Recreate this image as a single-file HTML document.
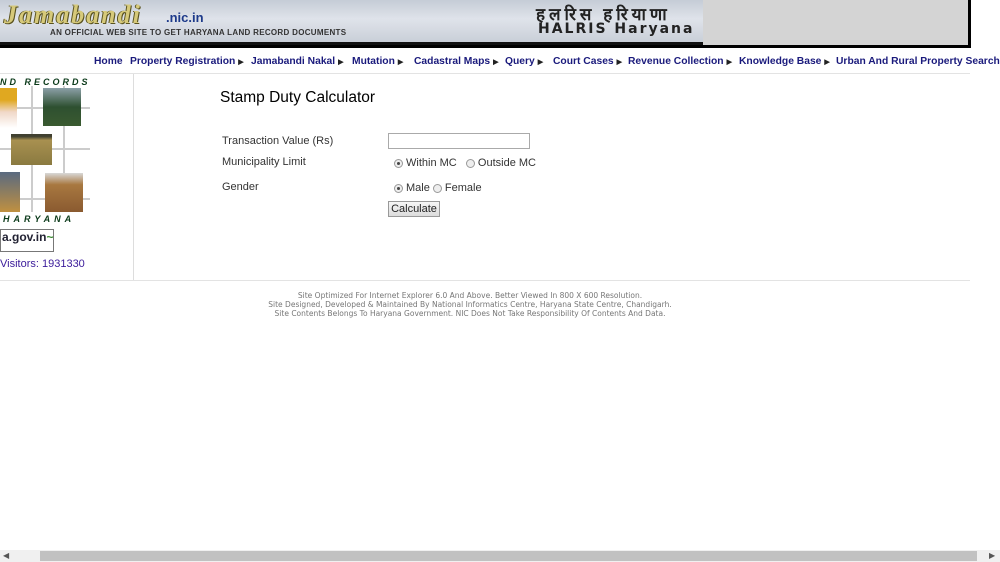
<!DOCTYPE html>
<html><head><meta charset="utf-8"><style>
*{margin:0;padding:0;box-sizing:border-box}
body{width:1000px;height:562px;overflow:hidden;background:#fff;font-family:"Liberation Sans",Arial,sans-serif;position:relative}
.hdr{position:absolute;left:0;top:0;width:971px;height:48px;background:#d4d4d4;border-right:3px solid #000;border-bottom:3px solid #000}
.ban{position:absolute;left:0;top:0;width:703px;height:45px;background:linear-gradient(180deg,#c5ccd6 0%,#dfe3ea 45%,#c9cfd8 100%);overflow:hidden;border-bottom:3px solid #111}
.logo{position:absolute;left:4px;top:0px;font:italic bold 26px "Liberation Serif",serif;color:#d6c97a;text-shadow:1px 1px 0 #5a5320,-1px 0 0 #5a5320;letter-spacing:2px}
.nic{position:absolute;left:166px;top:10px;font:bold 13px "Liberation Sans",sans-serif;color:#1d3a8a}
.tag{position:absolute;left:50px;top:28px;font:bold 8px "Liberation Sans",sans-serif;color:#333;letter-spacing:.3px}
.hin{position:absolute;left:536px;top:0px;font:bold 17px "Noto Sans CJK SC",sans-serif;color:#222;letter-spacing:4px}
.hal{position:absolute;left:538px;top:21px;font:bold 14px "DejaVu Sans",sans-serif;color:#222;letter-spacing:2px}
.nav span{position:absolute;top:56px;font:bold 10.3px "Liberation Sans",sans-serif;color:#1a1a7c;white-space:nowrap}
.nav b{font-size:7px;color:#222;margin-left:3px}
.line{position:absolute;left:0;width:970px;height:1px;background:#e3e3e3}
.vl{position:absolute;left:133px;top:74px;width:1px;height:206px;background:#ddd}
.side{position:absolute;left:0;top:74px;width:133px;height:206px}
.t1{position:absolute;left:0;top:3px;font:italic bold 9px "Liberation Sans",sans-serif;color:#0b3a1a;letter-spacing:3px;white-space:nowrap}
.ph{position:absolute}
h1{position:absolute;left:220px;top:89px;font:15.5px "Liberation Sans",sans-serif;color:#000}
.lb{position:absolute;left:222px;font-size:11px;color:#333}
.rd{position:absolute;font-size:11px;color:#333;display:flex;align-items:center}
.r{display:inline-block;width:9px;height:9px;border-radius:50%;border:1px solid #999;background:#eee;margin-right:3px;position:relative}
.r.on::after{content:"";position:absolute;left:2px;top:2px;width:3px;height:3px;border-radius:50%;background:#444}
.inp{position:absolute;left:388px;top:133px;width:142px;height:16px;border:1px solid #aaa;background:#fff}
.btn{position:absolute;left:388px;top:201px;width:52px;height:16px;border:1px solid #999;background:linear-gradient(#f6f6f6,#dcdcdc);font-size:11px;color:#222;text-align:center;line-height:14px}
.ft{position:absolute;left:0;width:940px;top:291px;text-align:center;font:7.5px "DejaVu Sans",sans-serif;color:#777;line-height:9px}
.sb{position:absolute;left:0;top:550px;width:1000px;height:12px;background:#f0f0f0}
.th{position:absolute;left:40px;top:551px;width:937px;height:10px;background:#c1c1c1}
</style></head><body>
<div class="hdr"><div class="ban">
<div class="logo">Jamabandi</div><div class="nic">.nic.in</div>
<div class="tag">AN OFFICIAL WEB SITE TO GET HARYANA LAND RECORD DOCUMENTS</div>
<div class="hin">हलरिस हरियाणा</div><div class="hal">HALRIS Haryana</div>
</div></div>
<div class="nav">
<span style="left:94px">Home</span>
<span style="left:130px">Property Registration<b>▶</b></span>
<span style="left:251px">Jamabandi Nakal<b>▶</b></span>
<span style="left:352px">Mutation<b>▶</b></span>
<span style="left:414px">Cadastral Maps<b>▶</b></span>
<span style="left:505px">Query<b>▶</b></span>
<span style="left:553px">Court Cases<b>▶</b></span>
<span style="left:628px">Revenue Collection<b>▶</b></span>
<span style="left:739px">Knowledge Base<b>▶</b></span>
<span style="left:836px">Urban And Rural Property Search<b>▶</b></span>
</div>
<div class="line" style="top:73px"></div>
<div class="side">
<div class="ph" style="left:0;top:33px;width:90px;height:2px;background:#ccc"></div>
<div class="ph" style="left:0;top:74px;width:90px;height:2px;background:#ccc"></div>
<div class="ph" style="left:0;top:124px;width:90px;height:2px;background:#ccc"></div>
<div class="ph" style="left:31px;top:12px;width:2px;height:126px;background:#ccc"></div>
<div class="ph" style="left:63px;top:12px;width:2px;height:126px;background:#ccc"></div>
<div class="t1">ND RECORDS</div>
<div class="ph" style="left:0;top:14px;width:17px;height:40px;background:linear-gradient(#e0a820 30%,#f0d8c8 60%,#fff)"></div>
<div class="ph" style="left:43px;top:14px;width:38px;height:38px;background:linear-gradient(#8ca0a8,#2e5030 50%,#3a5a30)"></div>
<div class="ph" style="left:11px;top:60px;width:41px;height:31px;background:linear-gradient(#404030 8%,#a89050 20%,#8a7a40)"></div>
<div class="ph" style="left:0;top:98px;width:20px;height:40px;background:linear-gradient(#5a6a80,#c09040)"></div>
<div class="ph" style="left:45px;top:99px;width:38px;height:39px;background:linear-gradient(#d8d8d8,#a87840 30%,#8a5a30)"></div>
<div class="t1" style="top:140px;left:3px;letter-spacing:4px">HARYANA</div>
<div class="ph" style="left:0;top:155px;width:54px;height:23px;border:1px solid #777;background:#fff;font:bold 12px 'Liberation Sans',sans-serif;color:#223;padding-left:1px">a.gov.in<span style="color:#3a8a30">~</span></div>
<div class="ph" style="left:0;top:184px;font-size:11px;color:#3a1a9a">Visitors: 1931330</div>
</div>
<div class="vl"></div>
<h1>Stamp Duty Calculator</h1>
<div class="lb" style="top:135px">Transaction Value (Rs)</div>
<div class="inp"></div>
<div class="lb" style="top:156px">Municipality Limit</div>
<div class="rd" style="left:394px;top:157px"><span class="r on"></span>Within MC&nbsp;&nbsp;&nbsp;<span class="r"></span>Outside MC</div>
<div class="lb" style="top:181px">Gender</div>
<div class="rd" style="left:394px;top:182px"><span class="r on"></span>Male&nbsp;<span class="r"></span>Female</div>
<div class="btn">Calculate</div>
<div class="line" style="top:280px"></div>
<div class="ft">Site Optimized For Internet Explorer 6.0 And Above. Better Viewed In 800 X 600 Resolution.<br>Site Designed, Developed &amp; Maintained By National Informatics Centre, Haryana State Centre, Chandigarh.<br>Site Contents Belongs To Haryana Government. NIC Does Not Take Responsibility Of Contents And Data.</div>
<div class="sb"></div><div class="th"></div>
<div style="position:absolute;left:3px;top:551px;font-size:8px;color:#555">◀</div>
<div style="position:absolute;left:989px;top:551px;font-size:8px;color:#555">▶</div>
</body></html>
